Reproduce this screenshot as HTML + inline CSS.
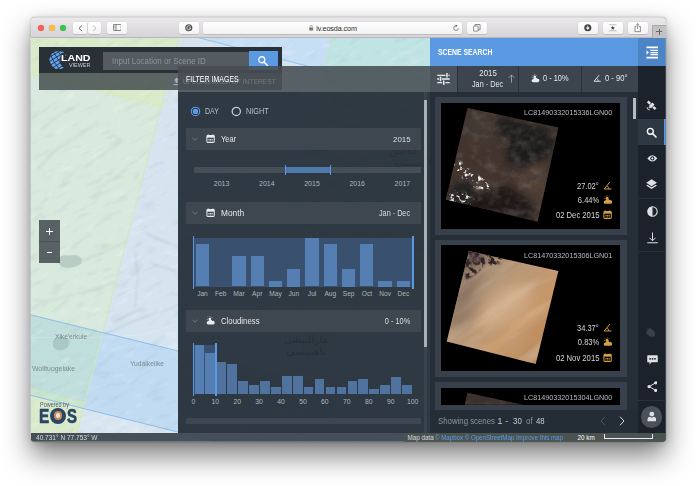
<!DOCTYPE html>
<html><head><meta charset="utf-8"><title>Land Viewer</title>
<style>
html,body{margin:0;padding:0;}
body{width:696px;height:486px;overflow:hidden;background:#fff;position:relative;font-family:"Liberation Sans",sans-serif;}
#shadow{position:absolute;left:30.7px;top:17.4px;width:635.1px;height:424.3px;border-radius:4px;box-shadow:0 14px 28px rgba(0,0,0,0.5),0 2px 8px rgba(0,0,0,0.15),0 0 1px rgba(0,0,0,0.5);background:#ccc;}
#win{position:absolute;left:0;top:0;width:696px;height:486px;clip-path:inset(17.4px 30.2px 44.3px 30.7px round 3.5px);}
#win div,#win span,#win svg{position:absolute;display:block;}
#win span{white-space:nowrap;}
#win span span{position:static;display:inline;}
</style></head><body>
<div id="shadow"></div>
<div id="win">
<svg style="left:0;top:0" width="696" height="486" viewBox="0 0 696 486">
<defs>
<filter id="hill" x="0" y="0" width="100%" height="100%"><feTurbulence type="fractalNoise" baseFrequency="0.05 0.16" numOctaves="4" seed="7"/><feColorMatrix type="matrix" values="0 0 0 0 0.36  0 0 0 0 0.42  0 0 0 0 0.44  2.6 0 0 0 -1.45"/></filter>
<filter id="hill2" x="0" y="0" width="100%" height="100%"><feTurbulence type="fractalNoise" baseFrequency="0.05 0.16" numOctaves="4" seed="23"/><feColorMatrix type="matrix" values="0 0 0 0 1  0 0 0 0 1  0 0 0 0 1  2.6 0 0 0 -1.5"/></filter>
<filter id="rb" x="-20%" y="-20%" width="140%" height="140%"><feGaussianBlur stdDeviation="0.9"/></filter>
<clipPath id="mapclip"><rect x="30" y="37" width="401" height="405"/></clipPath>
</defs>
<g clip-path="url(#mapclip)">
<rect x="30" y="37" width="401" height="405" fill="#d6e4f0"/>
<polygon points="30,37 178.8,37 102.8,332.5 30,314.7" fill="#d8e9dd"/>
<polygon points="30,37 178.8,37 160.9,106.5 30,73.5" fill="#daebcb"/>
<polygon points="196,37 333,37 326,72 330,72" fill="#c7dff5"/>
<polygon points="332,37 431,37 431,300 270,300" fill="#c0e3e3"/>
<polyline points="332,37 270,300" fill="none" stroke="#cfe6b0" stroke-width="0.8"/>
<polygon points="30,314.7 102.8,332.5 84.7,403.2 30,389.0" fill="#bfdedc"/>
<polygon points="30,389.0 84.7,403.2 83.3,408.4 30,395.2" fill="#c9e4d3"/>
<polygon points="102.8,332.5 431,413.1 431,495.0 83.3,408.4" fill="#c0dbf2"/>
<polygon points="30,395.2 83.3,408.4 74.7,442 30,442" fill="#d9ebcc"/>
<polygon points="83.3,408.4 431,495.0 431,442 74.7,442" fill="#d9e6f1"/>
<g transform="rotate(-28 200 240)"><rect x="-100" y="-100" width="700" height="700" filter="url(#hill)" opacity="0.24"/><rect x="-100" y="-100" width="700" height="700" filter="url(#hill2)" opacity="0.3"/></g>
<g fill="none" stroke="#aebbc8" stroke-width="1.5" opacity="0.42" filter="url(#rb)"><path d="M136 252 C134 262 140 272 137 284 C135 292 138 300 134 308"/><path d="M104 334 C118 330 128 322 142 318 C154 314 166 312 178 304"/><path d="M112 322 C124 318 132 312 146 309"/><path d="M150 262 C158 268 166 266 176 272"/><path d="M146 232 C154 240 166 240 178 248"/></g>
<g fill="none" stroke="#b4c4bb" stroke-width="1.4" opacity="0.4" filter="url(#rb)"><path d="M34 300 C50 304 64 296 84 292 C96 290 104 284 116 282"/><path d="M60 268 C76 264 90 258 104 252 C112 248 118 246 126 242"/><path d="M40 130 C52 122 60 112 74 108 M56 150 C70 140 84 134 98 122 M84 168 C98 158 110 150 122 140 M96 190 C108 182 118 176 128 168 M38 170 C46 160 52 152 62 146"/></g>
<path d="M40 219 C52 205 50 175 68 160 C85 146 105 152 118 132 C124 120 108 105 112 90" fill="none" stroke="#eef4ee" stroke-width="0.6" opacity="0.55"/>
<path d="M30 338 C60 336 100 339 140 335 C160 332 170 326 178 322" fill="none" stroke="#f2f6fa" stroke-width="0.6" opacity="0.45"/>
<line x1="178.8" y1="37" x2="74.7" y2="442" stroke="#d3e8b4" stroke-width="0.9"/>
<line x1="30" y1="314.7" x2="431" y2="413.1" stroke="#7db5ea" stroke-width="0.8"/>
<line x1="30" y1="395.2" x2="431" y2="495.0" stroke="#7db5ea" stroke-width="0.8"/>
<polyline points="30,73.5 160.9,106.5 165.5,107.7 183,39" fill="none" stroke="#d9ec9e" stroke-width="0.7" opacity="0.95"/>
<polyline points="30,389 84.7,403.2" fill="none" stroke="#d3e8a8" stroke-width="0.8"/>
<line x1="196" y1="37" x2="330" y2="72" stroke="#7db5ea" stroke-width="0.7"/>
<path d="M58 259 q3 -5 11 -3.5 q9 -2 12.5 3 q1.5 6 -6 8 q-11 3 -15.5 -1.5 q-3 -2 -2 -6z" fill="#b9cdc5"/>
<path d="M53 341 q3 -5 9 -4 q7 0 7.5 5 q0 6 -7 8 q-8 1 -9.5 -4z" fill="#a9c9c6"/>
</g>
</svg>
<span style="left:54.80px;top:333.00px;font-size:6.8px;line-height:7.00px;color:#7d8b8b;font-weight:400;transform:scaleX(0.9713);transform-origin:0 50%;">Xike'erkule</span>
<span style="left:129.60px;top:360.00px;font-size:6.8px;line-height:7.00px;color:#7d8b93;font-weight:400;transform:scaleX(0.9883);transform-origin:0 50%;">Yudaikelike</span>
<span style="left:31.50px;top:365.00px;font-size:6.8px;line-height:7.00px;color:#7d8b8b;font-weight:400;transform:scaleX(1.0096);transform-origin:0 50%;">Wolituogelake</span>
<div style="left:38.80px;top:219.50px;width:21.50px;height:21.20px;background:rgba(66,76,80,0.86);"></div>
<div style="left:38.80px;top:240.70px;width:21.50px;height:0.60px;background:rgba(110,120,122,0.86);"></div>
<div style="left:38.80px;top:241.30px;width:21.50px;height:21.30px;background:rgba(66,76,80,0.86);"></div>
<div style="left:46.30px;top:231.10px;width:6.40px;height:1.00px;background:#fff;"></div>
<div style="left:49.00px;top:228.40px;width:1.00px;height:6.40px;background:#fff;"></div>
<div style="left:46.70px;top:251.90px;width:5.60px;height:1.00px;background:#fff;"></div>
<span style="left:39.80px;top:401.00px;font-size:6.9px;line-height:7.00px;color:#4c5f6e;font-weight:400;transform:scaleX(0.7931);transform-origin:0 50%;">Powered by</span>
<span style="left:38.90px;top:405.00px;font-size:20.1px;line-height:22.00px;color:#2b4564;font-weight:700;transform:scaleX(0.7596);transform-origin:0 50%;-webkit-text-stroke:0.7px #2b4564;">E</span>
<span style="left:67.10px;top:405.00px;font-size:20.1px;line-height:22.00px;color:#2b4564;font-weight:700;transform:scaleX(0.7396);transform-origin:0 50%;-webkit-text-stroke:0.7px #2b4564;">S</span>
<div style="left:50.1px;top:407.9px;width:15.8px;height:15.8px;border-radius:50%;background:#2b4564;"></div>
<div style="left:53.7px;top:411.4px;width:8.6px;height:8.6px;border-radius:50%;background:#e4ead6;border:2px solid #cf8650;box-sizing:border-box;"></div>
<div style="left:38.90px;top:47.00px;width:243.30px;height:26.20px;background:rgba(34,41,48,0.96);"></div>
<div style="left:38.90px;top:73.20px;width:243.30px;height:16.40px;background:rgba(62,72,74,0.82);"></div>
<svg style="left:49px;top:49.6px" width="20" height="20" viewBox="0 0 40 40">
<defs><clipPath id="gl"><circle cx="19" cy="20" r="18.6"/></clipPath>
<mask id="glm"><rect width="40" height="40" fill="#fff"/><circle cx="44" cy="19" r="22" fill="#000"/></mask></defs>
<g clip-path="url(#gl)" mask="url(#glm)"><circle cx="19" cy="20" r="18.6" fill="#62a2ec"/>
<g stroke="#222a31" stroke-width="1.5" fill="none" transform="rotate(-32 19 20)">
<path d="M-5 6H45 M-5 13H45 M-5 20H45 M-5 27H45 M-5 34H45"/>
<path d="M19 0V40 M11 0 Q8 20 11 40 M27 0 Q30 20 27 40 M4 0 Q-2 20 4 40 M34 0 Q40 20 34 40"/>
</g></g>
<path d="M26 2.5 L30 4.5 L28 7z M33 8 l2.5 2.5 l-3 1z M25 35 l4 -1.5 l-1 3.5z" fill="#62a2ec"/>
</svg>
<span style="left:61.30px;top:53.00px;font-size:8.5px;line-height:10.00px;color:#ffffff;font-weight:700;transform:scaleX(1.2496);transform-origin:0 50%;">LAND</span>
<span style="left:68.70px;top:63.00px;font-size:4.6px;line-height:5.00px;color:#c9d0d6;font-weight:400;transform:scaleX(1.1738);transform-origin:0 50%;">VIEWER</span>
<div style="left:103.30px;top:51.50px;width:145.50px;height:18.20px;background:#545c61;"></div>
<span style="left:111.60px;top:56.00px;font-size:9.3px;line-height:10.00px;color:#8d9599;font-weight:400;transform:scaleX(0.8509);transform-origin:0 50%;">Input Location or Scene ID</span>
<div style="left:248.80px;top:51.20px;width:29.00px;height:18.50px;background:#5b9ae3;"></div>
<svg style="left:257px;top:54.5px" width="12" height="12" viewBox="0 0 24 24"><circle cx="9.5" cy="9.5" r="6" fill="none" stroke="#fff" stroke-width="2.6"/><path d="M14 14 L21 21" stroke="#fff" stroke-width="3" stroke-linecap="round"/></svg>
<svg style="left:172.6px;top:77.2px" width="7" height="8.6" viewBox="0 0 14 17"><path d="M7 1 L12.5 7 H9 V12 H5 V7 H1.5Z M1 14.5 H13 V16.5 H1Z" fill="#aab2b5"/></svg>
<span style="left:183.00px;top:77.00px;font-size:7.8px;line-height:9.00px;color:#8e979a;font-weight:400;transform:scaleX(0.8564);transform-origin:0 50%;">UPLOAD AREA OF INTEREST</span>
<div style="left:177.50px;top:65.80px;width:252.50px;height:26.00px;background:rgba(70,77,82,0.88);"></div>
<div style="left:177.50px;top:91.80px;width:252.50px;height:341.50px;background:rgba(36,46,55,0.94);"></div>
<span style="left:283px;top:333px;width:46px;text-align:center;font-size:10.5px;line-height:12.5px;color:#232a31;opacity:0.75;font-family:'DejaVu Sans',sans-serif;">مارالبېشى</span>
<span style="left:281px;top:345px;width:50px;text-align:center;font-size:10.5px;line-height:12.5px;color:#232a31;opacity:0.75;font-family:'DejaVu Sans',sans-serif;">ناھىيىسى</span>
<span style="left:389px;top:144px;font-size:10.5px;line-height:12.5px;color:#232a31;opacity:0.6;font-family:'DejaVu Sans',sans-serif;">كەلپىن</span>
<span style="left:395px;top:156px;font-size:10.5px;line-height:12.5px;color:#232a31;opacity:0.6;font-family:'DejaVu Sans',sans-serif;">ناھىيىسى</span>
<span style="left:183.00px;top:77.00px;font-size:7.8px;line-height:9.00px;color:#6f787c;font-weight:400;transform:scaleX(0.8564);transform-origin:0 50%;">UPLOAD AREA OF INTEREST</span>
<span style="left:185.80px;top:74.00px;font-size:8.7px;line-height:10.00px;color:#ffffff;font-weight:400;transform:scaleX(0.8051);transform-origin:0 50%;">FILTER IMAGES</span>
<svg style="left:186px;top:104px" width="60" height="15" viewBox="0 0 60 15"><circle cx="9.5" cy="7.4" r="4.2" fill="none" stroke="#5b9ae3" stroke-width="1.1"/><circle cx="9.5" cy="7.4" r="2.7" fill="#5b9ae3"/><circle cx="50.3" cy="7.4" r="4.1" fill="none" stroke="#c3c9ce" stroke-width="1.3"/></svg>
<span style="left:204.90px;top:107.00px;font-size:8.2px;line-height:9.00px;color:#b9c0c6;font-weight:400;transform:scaleX(0.8491);transform-origin:0 50%;">DAY</span>
<span style="left:246.10px;top:107.00px;font-size:8.2px;line-height:9.00px;color:#b9c0c6;font-weight:400;transform:scaleX(0.8860);transform-origin:0 50%;">NIGHT</span>
<div style="left:185.80px;top:128.00px;width:235.50px;height:21.70px;background:rgba(72,81,89,0.62);"></div>
<svg style="left:191.90px;top:136.80px" width="6" height="4" viewBox="0 0 12 8"><path d="M1 1.5 L6 6.5 L11 1.5" fill="none" stroke="#8b949b" stroke-width="1.3"/></svg>
<svg style="left:205.80px;top:134.00px" width="9.2" height="9.2" viewBox="0 0 20 20"><path d="M5 1 V4 M15 1 V4" stroke="#e8ecef" stroke-width="2.4"/><rect x="2" y="3.5" width="16" height="15" rx="2" fill="none" stroke="#e8ecef" stroke-width="2.2"/><rect x="2" y="3.5" width="16" height="4.5" fill="#e8ecef"/><path d="M5.5 11h2.2v2.2H5.5z M9 11h2.2v2.2H9z M12.5 11h2.2v2.2h-2.2z M5.5 14.3h2.2v2H5.5z M9 14.3h2.2v2H9z M12.5 14.3h2.2v2h-2.2z" fill="#e8ecef"/></svg>
<span style="left:220.50px;top:134.00px;font-size:8.6px;line-height:10.00px;color:#e4e8eb;font-weight:400;transform:scaleX(0.8689);transform-origin:0 50%;">Year</span>
<span style="left:392.72px;top:135.00px;font-size:7.9px;line-height:9.00px;color:#d9dee2;font-weight:400;transform:scaleX(0.9957);transform-origin:100% 50%;">2015</span>
<div style="left:193.90px;top:167.00px;width:227.60px;height:6.30px;background:#454e57;"></div>
<div style="left:285.00px;top:167.00px;width:45.40px;height:6.30px;background:#4f78ad;"></div>
<div style="left:284.50px;top:165.00px;width:1.10px;height:10.20px;background:#5b9ae3;"></div>
<div style="left:329.90px;top:165.00px;width:1.10px;height:10.20px;background:#5b9ae3;"></div>
<span style="left:213.81px;top:180.00px;font-size:7px;line-height:7.00px;color:#aeb5bb;font-weight:400;font-family:'Liberation Sans',sans-serif;">2013</span>
<span style="left:259.01px;top:180.00px;font-size:7px;line-height:7.00px;color:#aeb5bb;font-weight:400;font-family:'Liberation Sans',sans-serif;">2014</span>
<span style="left:304.21px;top:180.00px;font-size:7px;line-height:7.00px;color:#aeb5bb;font-weight:400;font-family:'Liberation Sans',sans-serif;">2015</span>
<span style="left:349.41px;top:180.00px;font-size:7px;line-height:7.00px;color:#aeb5bb;font-weight:400;font-family:'Liberation Sans',sans-serif;">2016</span>
<span style="left:394.61px;top:180.00px;font-size:7px;line-height:7.00px;color:#aeb5bb;font-weight:400;font-family:'Liberation Sans',sans-serif;">2017</span>
<div style="left:185.80px;top:202.10px;width:235.50px;height:21.70px;background:rgba(72,81,89,0.62);"></div>
<svg style="left:191.90px;top:211.00px" width="6" height="4" viewBox="0 0 12 8"><path d="M1 1.5 L6 6.5 L11 1.5" fill="none" stroke="#8b949b" stroke-width="1.3"/></svg>
<svg style="left:205.80px;top:208.20px" width="9.2" height="9.2" viewBox="0 0 20 20"><path d="M5 1 V4 M15 1 V4" stroke="#e8ecef" stroke-width="2.4"/><rect x="2" y="3.5" width="16" height="15" rx="2" fill="none" stroke="#e8ecef" stroke-width="2.2"/><rect x="2" y="3.5" width="16" height="4.5" fill="#e8ecef"/><path d="M5.5 11h2.2v2.2H5.5z M9 11h2.2v2.2H9z M12.5 11h2.2v2.2h-2.2z M5.5 14.3h2.2v2H5.5z M9 14.3h2.2v2H9z M12.5 14.3h2.2v2h-2.2z" fill="#e8ecef"/></svg>
<span style="left:220.90px;top:208.00px;font-size:8.6px;line-height:10.00px;color:#e4e8eb;font-weight:400;transform:scaleX(0.9706);transform-origin:0 50%;">Month</span>
<span style="left:375.11px;top:209.00px;font-size:8.2px;line-height:9.00px;color:#d9dee2;font-weight:400;transform:scaleX(0.8863);transform-origin:100% 50%;">Jan - Dec</span>
<div style="left:193.50px;top:238.00px;width:219.70px;height:48.50px;background:#39506f;"></div>
<div style="left:195.70px;top:243.70px;width:13.30px;height:42.80px;background:#557eb2;"></div>
<div style="left:232.24px;top:256.10px;width:13.30px;height:30.40px;background:#557eb2;"></div>
<div style="left:250.51px;top:256.10px;width:13.30px;height:30.40px;background:#557eb2;"></div>
<div style="left:268.78px;top:280.50px;width:13.30px;height:6.00px;background:#557eb2;"></div>
<div style="left:287.05px;top:268.50px;width:13.30px;height:18.00px;background:#557eb2;"></div>
<div style="left:305.32px;top:237.70px;width:13.30px;height:48.80px;background:#557eb2;"></div>
<div style="left:323.59px;top:243.70px;width:13.30px;height:42.80px;background:#557eb2;"></div>
<div style="left:341.86px;top:268.50px;width:13.30px;height:18.00px;background:#557eb2;"></div>
<div style="left:360.13px;top:243.70px;width:13.30px;height:42.80px;background:#557eb2;"></div>
<div style="left:378.40px;top:280.50px;width:13.30px;height:6.00px;background:#557eb2;"></div>
<div style="left:396.67px;top:280.50px;width:13.30px;height:6.00px;background:#557eb2;"></div>
<div style="left:192.80px;top:235.70px;width:1.70px;height:53.00px;background:#5b9ae3;"></div>
<div style="left:412.30px;top:235.70px;width:1.70px;height:53.00px;background:#5b9ae3;"></div>
<span style="left:197.13px;top:290.00px;font-size:6.6px;line-height:7.00px;color:#aeb5bb;font-weight:400;">Jan</span>
<span style="left:215.03px;top:290.00px;font-size:6.6px;line-height:7.00px;color:#aeb5bb;font-weight:400;">Feb</span>
<span style="left:233.31px;top:290.00px;font-size:6.6px;line-height:7.00px;color:#aeb5bb;font-weight:400;">Mar</span>
<span style="left:252.12px;top:290.00px;font-size:6.6px;line-height:7.00px;color:#aeb5bb;font-weight:400;">Apr</span>
<span style="left:269.30px;top:290.00px;font-size:6.6px;line-height:7.00px;color:#aeb5bb;font-weight:400;">May</span>
<span style="left:288.48px;top:290.00px;font-size:6.6px;line-height:7.00px;color:#aeb5bb;font-weight:400;">Jun</span>
<span style="left:307.85px;top:290.00px;font-size:6.6px;line-height:7.00px;color:#aeb5bb;font-weight:400;">Jul</span>
<span style="left:324.47px;top:290.00px;font-size:6.6px;line-height:7.00px;color:#aeb5bb;font-weight:400;">Aug</span>
<span style="left:342.74px;top:290.00px;font-size:6.6px;line-height:7.00px;color:#aeb5bb;font-weight:400;">Sep</span>
<span style="left:361.75px;top:290.00px;font-size:6.6px;line-height:7.00px;color:#aeb5bb;font-weight:400;">Oct</span>
<span style="left:379.28px;top:290.00px;font-size:6.6px;line-height:7.00px;color:#aeb5bb;font-weight:400;">Nov</span>
<span style="left:397.55px;top:290.00px;font-size:6.6px;line-height:7.00px;color:#aeb5bb;font-weight:400;">Dec</span>
<div style="left:185.80px;top:310.20px;width:235.50px;height:21.50px;background:rgba(72,81,89,0.62);"></div>
<svg style="left:191.90px;top:319.10px" width="6" height="4" viewBox="0 0 12 8"><path d="M1 1.5 L6 6.5 L11 1.5" fill="none" stroke="#8b949b" stroke-width="1.3"/></svg>
<svg style="left:205.65px;top:315.65px" width="9.5" height="9.5" viewBox="0 0 22 22"><circle cx="9" cy="7" r="3.2" fill="#e8ecef"/><path d="M9 0.5v2 M3.5 2.5l1.4 1.4 M14.5 2.5l-1.4 1.4 M2 8h2" stroke="#e8ecef" stroke-width="1.5"/><path d="M5 19.5 a3.6 3.6 0 0 1 0.3 -7.2 a5 5 0 0 1 9.4 -0.8 a4 4 0 0 1 2.3 8z" fill="#e8ecef"/></svg>
<span style="left:220.90px;top:316.00px;font-size:8.6px;line-height:10.00px;color:#e4e8eb;font-weight:400;transform:scaleX(0.9072);transform-origin:0 50%;">Cloudiness</span>
<span style="left:381.94px;top:317.00px;font-size:8.2px;line-height:9.00px;color:#d9dee2;font-weight:400;transform:scaleX(0.9023);transform-origin:100% 50%;">0 - 10%</span>
<div style="left:193.50px;top:344.90px;width:21.70px;height:49.20px;background:#39506f;"></div>
<div style="left:194.50px;top:344.70px;width:9.70px;height:49.40px;background:#557eb2;"></div>
<div style="left:205.43px;top:352.60px;width:9.70px;height:41.50px;background:#557eb2;"></div>
<div style="left:216.36px;top:362.00px;width:9.70px;height:32.10px;background:#4f729f;"></div>
<div style="left:227.29px;top:364.20px;width:9.70px;height:29.90px;background:#4f729f;"></div>
<div style="left:238.22px;top:381.10px;width:9.70px;height:13.00px;background:#4f729f;"></div>
<div style="left:249.15px;top:385.20px;width:9.70px;height:8.90px;background:#4f729f;"></div>
<div style="left:260.08px;top:381.10px;width:9.70px;height:13.00px;background:#4f729f;"></div>
<div style="left:271.01px;top:386.70px;width:9.70px;height:7.40px;background:#4f729f;"></div>
<div style="left:281.94px;top:375.50px;width:9.70px;height:18.60px;background:#4f729f;"></div>
<div style="left:292.87px;top:375.50px;width:9.70px;height:18.60px;background:#4f729f;"></div>
<div style="left:303.80px;top:386.70px;width:9.70px;height:7.40px;background:#4f729f;"></div>
<div style="left:314.73px;top:379.20px;width:9.70px;height:14.90px;background:#4f729f;"></div>
<div style="left:325.66px;top:386.70px;width:9.70px;height:7.40px;background:#4f729f;"></div>
<div style="left:336.59px;top:386.70px;width:9.70px;height:7.40px;background:#4f729f;"></div>
<div style="left:347.52px;top:381.10px;width:9.70px;height:13.00px;background:#4f729f;"></div>
<div style="left:358.45px;top:379.20px;width:9.70px;height:14.90px;background:#4f729f;"></div>
<div style="left:369.38px;top:388.60px;width:9.70px;height:5.50px;background:#4f729f;"></div>
<div style="left:380.31px;top:384.90px;width:9.70px;height:9.20px;background:#4f729f;"></div>
<div style="left:391.24px;top:377.40px;width:9.70px;height:16.70px;background:#4f729f;"></div>
<div style="left:402.17px;top:384.90px;width:9.70px;height:9.20px;background:#4f729f;"></div>
<div style="left:192.80px;top:343.10px;width:1.70px;height:52.60px;background:#5b9ae3;"></div>
<div style="left:214.80px;top:343.10px;width:1.80px;height:52.60px;background:#5b9ae3;"></div>
<span style="left:191.41px;top:398.00px;font-size:6.8px;line-height:7.00px;color:#aeb5bb;font-weight:400;">0</span>
<span style="left:211.45px;top:398.00px;font-size:6.8px;line-height:7.00px;color:#aeb5bb;font-weight:400;">10</span>
<span style="left:233.38px;top:398.00px;font-size:6.8px;line-height:7.00px;color:#aeb5bb;font-weight:400;">20</span>
<span style="left:255.31px;top:398.00px;font-size:6.8px;line-height:7.00px;color:#aeb5bb;font-weight:400;">30</span>
<span style="left:277.24px;top:398.00px;font-size:6.8px;line-height:7.00px;color:#aeb5bb;font-weight:400;">40</span>
<span style="left:299.17px;top:398.00px;font-size:6.8px;line-height:7.00px;color:#aeb5bb;font-weight:400;">50</span>
<span style="left:321.10px;top:398.00px;font-size:6.8px;line-height:7.00px;color:#aeb5bb;font-weight:400;">60</span>
<span style="left:343.03px;top:398.00px;font-size:6.8px;line-height:7.00px;color:#aeb5bb;font-weight:400;">70</span>
<span style="left:364.96px;top:398.00px;font-size:6.8px;line-height:7.00px;color:#aeb5bb;font-weight:400;">80</span>
<span style="left:386.89px;top:398.00px;font-size:6.8px;line-height:7.00px;color:#aeb5bb;font-weight:400;">90</span>
<span style="left:406.93px;top:398.00px;font-size:6.8px;line-height:7.00px;color:#aeb5bb;font-weight:400;">100</span>
<div style="left:185.80px;top:417.50px;width:235.50px;height:6.30px;background:rgba(72,81,89,0.62);"></div>
<div style="left:423.50px;top:91.80px;width:3.60px;height:341.50px;background:rgba(255,255,255,0.05);"></div>
<div style="left:423.50px;top:100.00px;width:3.60px;height:247.00px;background:#a9afb4;"></div>
<div style="left:430.00px;top:38.00px;width:208.20px;height:27.80px;background:#5b9ae3;"></div>
<div style="left:638.20px;top:38.00px;width:27.60px;height:27.80px;background:#4d84c6;"></div>
<span style="left:437.80px;top:47.00px;font-size:8.4px;line-height:10.00px;color:#ffffff;font-weight:700;transform:scaleX(0.8165);transform-origin:0 50%;">SCENE SEARCH</span>
<svg style="left:645.6px;top:46.0px" width="12.6" height="12.8" viewBox="0 0 26 26"><path d="M1 1H25V4.5H1z M9 7.5H25V10H9z M9 12H25V14.5H9z M9 16.5H25V19H9z M1 22H25V25.5H1z M1 8.5 L6 13.2 L1 18z" fill="#fff"/></svg>
<div style="left:430.00px;top:65.80px;width:208.20px;height:25.90px;background:#3c444e;"></div>
<div style="left:457.00px;top:65.80px;width:0.80px;height:25.90px;background:#2a3139;"></div>
<div style="left:518.00px;top:65.80px;width:0.80px;height:25.90px;background:#2a3139;"></div>
<div style="left:581.00px;top:65.80px;width:0.80px;height:25.90px;background:#2a3139;"></div>
<div style="left:430.00px;top:65.80px;width:27.00px;height:26.00px;background:#4a525c;"></div>
<svg style="left:437.2px;top:72.8px" width="12.9" height="12" viewBox="0 0 25 24"><g fill="#e8ecef"><path d="M0 3.3H16.5V5.9H0z M22.5 3.3H25V5.9H22.5z M18 0H21V9.2H18z M0 10.7H4V13.3H0z M9.5 10.7H25V13.3H9.5z M5.2 7.4H8.2V16.6H5.2z M0 18.1H10V20.7H0z M16.5 18.1H25V20.7H16.5z M11.6 14.8H14.6V24H11.6z"/></g></svg>
<span style="left:478.88px;top:69.00px;font-size:8.2px;line-height:9.00px;color:#e4e8eb;font-weight:400;transform:scaleX(0.9593);transform-origin:50% 50%;">2015</span>
<span style="left:470.15px;top:80.00px;font-size:8.2px;line-height:9.00px;color:#e4e8eb;font-weight:400;transform:scaleX(0.8863);transform-origin:50% 50%;">Jan - Dec</span>
<svg style="left:507.8px;top:73.6px" width="7" height="9" viewBox="0 0 14 18"><path d="M7 17 V2 M1.5 7.5 L7 2 L12.5 7.5" fill="none" stroke="#b4bbc1" stroke-width="1.5"/></svg>
<svg style="left:531.10px;top:73.70px" width="9.2" height="9.2" viewBox="0 0 22 22"><circle cx="9" cy="7" r="3.2" fill="#e8ecef"/><path d="M9 0.5v2 M3.5 2.5l1.4 1.4 M14.5 2.5l-1.4 1.4 M2 8h2" stroke="#e8ecef" stroke-width="1.5"/><path d="M5 19.5 a3.6 3.6 0 0 1 0.3 -7.2 a5 5 0 0 1 9.4 -0.8 a4 4 0 0 1 2.3 8z" fill="#e8ecef"/></svg>
<span style="left:543.20px;top:74.00px;font-size:8.2px;line-height:9.00px;color:#e4e8eb;font-weight:400;transform:scaleX(0.9023);transform-origin:0 50%;">0 - 10%</span>
<svg style="left:593.00px;top:74.20px" width="8.6" height="8.6" viewBox="0 0 20 20"><path d="M14.5 2.5 L2.5 17 H18" fill="none" stroke="#e8ecef" stroke-width="2.1" stroke-linejoin="miter"/><path d="M8.5 10.5 Q12.5 12.5 12.5 17" fill="none" stroke="#e8ecef" stroke-width="1.8"/></svg>
<span style="left:605.00px;top:74.00px;font-size:8.2px;line-height:9.00px;color:#e4e8eb;font-weight:400;transform:scaleX(0.9279);transform-origin:0 50%;">0 - 90°</span>
<div style="left:430.00px;top:91.70px;width:208.20px;height:318.30px;background:#262e37;"></div>
<div style="left:638.20px;top:65.80px;width:27.60px;height:367.50px;background:#1b222b;"></div>
<div style="left:430px;top:91.7px;width:208.2px;height:318.3px;overflow:hidden;background:none;">
<div style="left:5px;top:5.80px;width:192px;height:137.2px;background:#37404b;"></div>
<div style="left:10.7px;top:11.30px;width:179.5px;height:125.8px;background:#000;"></div>
<div style="left:5px;top:148.20px;width:192px;height:137.2px;background:#37404b;"></div>
<div style="left:10.7px;top:153.70px;width:179.5px;height:125.8px;background:#000;"></div>
<div style="left:5px;top:290.70px;width:192px;height:137.2px;background:#37404b;"></div>
<div style="left:10.7px;top:296.20px;width:179.5px;height:125.8px;background:#000;"></div>
</div>
<div style="left:435.00px;top:404.70px;width:192.00px;height:5.30px;background:#37404b;"></div>
<svg style="left:0;top:0" width="696" height="486" viewBox="0 0 696 486">
<defs>
<filter id="tex1" x="0" y="0" width="100%" height="100%"><feTurbulence type="fractalNoise" baseFrequency="0.09 0.12" numOctaves="4" seed="3"/><feColorMatrix type="matrix" values="0 0 0 0 0.05  0 0 0 0 0.04  0 0 0 0 0.04  2.2 0 0 0 -0.95"/></filter>
<filter id="tex1b" x="0" y="0" width="100%" height="100%"><feTurbulence type="fractalNoise" baseFrequency="0.07 0.1" numOctaves="4" seed="9"/><feColorMatrix type="matrix" values="0 0 0 0 0.45  0 0 0 0 0.36  0 0 0 0 0.3  2.2 0 0 0 -1.1"/></filter>
<filter id="tex2" x="0" y="0" width="100%" height="100%"><feTurbulence type="fractalNoise" baseFrequency="0.015 0.07" numOctaves="3" seed="11"/><feColorMatrix type="matrix" values="0 0 0 0 0.5  0 0 0 0 0.38  0 0 0 0 0.3  1.9 0 0 0 -0.8"/></filter>
<filter id="tex2b" x="0" y="0" width="100%" height="100%"><feTurbulence type="fractalNoise" baseFrequency="0.015 0.07" numOctaves="3" seed="31"/><feColorMatrix type="matrix" values="0 0 0 0 0.92  0 0 0 0 0.76  0 0 0 0 0.58  1.9 0 0 0 -0.85"/></filter>
<filter id="speck" x="-10%" y="-10%" width="120%" height="120%"><feTurbulence type="fractalNoise" baseFrequency="0.22 0.22" numOctaves="3" seed="5" result="n"/><feColorMatrix in="n" type="matrix" values="0 0 0 0 1  0 0 0 0 1  0 0 0 0 1  6 0 0 0 -3.3" result="m"/><feGaussianBlur in="SourceGraphic" stdDeviation="1.2" result="b"/><feComposite in="b" in2="m" operator="in"/></filter>
<filter id="speckd" x="-10%" y="-10%" width="120%" height="120%"><feTurbulence type="fractalNoise" baseFrequency="0.2 0.2" numOctaves="3" seed="15" result="n"/><feColorMatrix in="n" type="matrix" values="0 0 0 0 1  0 0 0 0 1  0 0 0 0 1  5 0 0 0 -2.1" result="m"/><feGaussianBlur in="SourceGraphic" stdDeviation="1" result="b"/><feComposite in="b" in2="m" operator="in"/></filter>
<filter id="bl3" x="-60%" y="-60%" width="220%" height="220%"><feGaussianBlur stdDeviation="3"/></filter>
<filter id="bl5" x="-60%" y="-60%" width="220%" height="220%"><feGaussianBlur stdDeviation="5"/></filter>
<filter id="bl8" x="-60%" y="-60%" width="220%" height="220%"><feGaussianBlur stdDeviation="8"/></filter>
<linearGradient id="g2" gradientUnits="userSpaceOnUse" x1="455" y1="265" x2="550" y2="350"><stop offset="0" stop-color="#8f7966"/><stop offset="0.4" stop-color="#b99877"/><stop offset="0.7" stop-color="#c69768"/><stop offset="1" stop-color="#b98556"/></linearGradient>
<clipPath id="c1"><polygon points="467.5,108 558.4,127.5 537.6,221.7 445.9,199.5"/></clipPath>
<clipPath id="c2"><polygon points="468.9,251 558.4,271 535.7,363.9 446.7,341.4"/></clipPath>
<clipPath id="c3"><polygon points="467.5,392.8 558.4,412.3 537.6,506 445.9,484"/></clipPath>
<clipPath id="c3b"><rect x="430" y="380" width="208" height="24.7"/></clipPath>
</defs>
<g clip-path="url(#c1)"><rect x="440" y="100" width="125" height="130" fill="#43352e"/>
<ellipse cx="535" cy="180" rx="16" ry="24" fill="#564539" filter="url(#bl5)" opacity="0.8"/>
<ellipse cx="480" cy="130" rx="14" ry="16" fill="#4a3d36" filter="url(#bl5)" opacity="0.8"/>
<path d="M498 116 L552 130 L556 150 L540 162 L520 168 L505 160 L510 140 L495 130z" fill="#1f1a1d" filter="url(#bl3)" opacity="1"/>
<path d="M470 200 L505 185 L530 200 L536 222 L460 210z" fill="#1c1818" filter="url(#bl3)" opacity="0.9"/>
<path d="M448 185 L470 180 L480 200 L450 202z" fill="#1f1b1b" filter="url(#bl3)" opacity="0.8"/>
<rect x="440" y="100" width="125" height="130" filter="url(#tex1)" opacity="0.9"/><rect x="440" y="100" width="125" height="130" filter="url(#tex1b)" opacity="0.28"/>
<path d="M454 160 L462 162 L476 174 L492 182 L494 190 L480 190 L466 182 L455 172z" fill="#f4f4f8" filter="url(#speck)"/>
<path d="M446 192 L462 190 L474 200 L468 206 L447 201z" fill="#e8e8ee" filter="url(#speck)"/>
</g>
<g clip-path="url(#c2)"><rect x="440" y="245" width="125" height="125" fill="url(#g2)"/>
<ellipse cx="508" cy="308" rx="30" ry="15" fill="#d8b088" filter="url(#bl8)" opacity="0.8" transform="rotate(-35 505 310)"/>
<ellipse cx="462" cy="295" rx="14" ry="36" fill="#85705f" filter="url(#bl8)" opacity="0.8" transform="rotate(12 462 295)"/>
<g transform="rotate(-35 500 310)"><rect x="360" y="180" width="280" height="280" filter="url(#tex2)" opacity="0.5"/><rect x="360" y="180" width="280" height="280" filter="url(#tex2b)" opacity="0.35"/></g>
<path d="M467 250 L503 258 L499 266 L486 264 L476 274 L466 280 L464 268z" fill="#2e2228" filter="url(#speckd)"/>
<path d="M468 251 L488 256 L476 263 L467 265z" fill="#3a2c30" filter="url(#bl3)" opacity="0.7"/>
</g>
<g clip-path="url(#c3b)"><g clip-path="url(#c3)"><rect x="440" y="388" width="125" height="20" fill="#3c302b"/><rect x="440" y="388" width="125" height="20" filter="url(#tex1)" opacity="0.8"/><rect x="440" y="388" width="125" height="20" filter="url(#tex1b)" opacity="0.2"/></g></g>
</svg>
<span style="left:523.90px;top:108.00px;font-size:7.3px;line-height:9.00px;color:#b6bcc2;font-weight:400;transform:scaleX(0.9899);transform-origin:0 50%;">LC81490332015336LGN00</span>
<span style="left:575.40px;top:182.00px;font-size:8.2px;line-height:9.00px;color:#d4d8dc;font-weight:400;transform:scaleX(0.9160);transform-origin:100% 50%;">27.02°</span>
<svg style="left:603.10px;top:180.70px" width="9.4" height="9.4" viewBox="0 0 20 20"><path d="M14.5 2.5 L2.5 17 H18" fill="none" stroke="#d3a042" stroke-width="2.1" stroke-linejoin="miter"/><path d="M8.5 10.5 Q12.5 12.5 12.5 17" fill="none" stroke="#d3a042" stroke-width="1.8"/></svg>
<span style="left:575.95px;top:196.00px;font-size:8.2px;line-height:9.00px;color:#d4d8dc;font-weight:400;transform:scaleX(0.9204);transform-origin:100% 50%;">6.44%</span>
<svg style="left:602.60px;top:194.60px" width="10" height="10" viewBox="0 0 22 22"><circle cx="9" cy="7" r="3.2" fill="#d3a042"/><path d="M9 0.5v2 M3.5 2.5l1.4 1.4 M14.5 2.5l-1.4 1.4 M2 8h2" stroke="#d3a042" stroke-width="1.5"/><path d="M5 19.5 a3.6 3.6 0 0 1 0.3 -7.2 a5 5 0 0 1 9.4 -0.8 a4 4 0 0 1 2.3 8z" fill="#d3a042"/></svg>
<span style="left:552.70px;top:211.00px;font-size:8.2px;line-height:9.00px;color:#d4d8dc;font-weight:400;transform:scaleX(0.9376);transform-origin:100% 50%;">02 Dec 2015</span>
<svg style="left:602.90px;top:210.40px" width="9.2" height="9.2" viewBox="0 0 20 20"><path d="M5 1 V4 M15 1 V4" stroke="#d3a042" stroke-width="2.4"/><rect x="2" y="3.5" width="16" height="15" rx="2" fill="none" stroke="#d3a042" stroke-width="2.2"/><rect x="2" y="3.5" width="16" height="4.5" fill="#d3a042"/><path d="M5.5 11h2.2v2.2H5.5z M9 11h2.2v2.2H9z M12.5 11h2.2v2.2h-2.2z M5.5 14.3h2.2v2H5.5z M9 14.3h2.2v2H9z M12.5 14.3h2.2v2h-2.2z" fill="#d3a042"/></svg>
<span style="left:523.90px;top:251.00px;font-size:7.3px;line-height:9.00px;color:#b6bcc2;font-weight:400;transform:scaleX(0.9899);transform-origin:0 50%;">LC81470332015306LGN01</span>
<span style="left:575.40px;top:324.00px;font-size:8.2px;line-height:9.00px;color:#d4d8dc;font-weight:400;transform:scaleX(0.9160);transform-origin:100% 50%;">34.37°</span>
<svg style="left:603.10px;top:323.10px" width="9.4" height="9.4" viewBox="0 0 20 20"><path d="M14.5 2.5 L2.5 17 H18" fill="none" stroke="#d3a042" stroke-width="2.1" stroke-linejoin="miter"/><path d="M8.5 10.5 Q12.5 12.5 12.5 17" fill="none" stroke="#d3a042" stroke-width="1.8"/></svg>
<span style="left:575.95px;top:338.00px;font-size:8.2px;line-height:9.00px;color:#d4d8dc;font-weight:400;transform:scaleX(0.9204);transform-origin:100% 50%;">0.83%</span>
<svg style="left:602.60px;top:337.00px" width="10" height="10" viewBox="0 0 22 22"><circle cx="9" cy="7" r="3.2" fill="#d3a042"/><path d="M9 0.5v2 M3.5 2.5l1.4 1.4 M14.5 2.5l-1.4 1.4 M2 8h2" stroke="#d3a042" stroke-width="1.5"/><path d="M5 19.5 a3.6 3.6 0 0 1 0.3 -7.2 a5 5 0 0 1 9.4 -0.8 a4 4 0 0 1 2.3 8z" fill="#d3a042"/></svg>
<span style="left:552.70px;top:354.00px;font-size:8.2px;line-height:9.00px;color:#d4d8dc;font-weight:400;transform:scaleX(0.9376);transform-origin:100% 50%;">02 Nov 2015</span>
<svg style="left:602.90px;top:352.80px" width="9.2" height="9.2" viewBox="0 0 20 20"><path d="M5 1 V4 M15 1 V4" stroke="#d3a042" stroke-width="2.4"/><rect x="2" y="3.5" width="16" height="15" rx="2" fill="none" stroke="#d3a042" stroke-width="2.2"/><rect x="2" y="3.5" width="16" height="4.5" fill="#d3a042"/><path d="M5.5 11h2.2v2.2H5.5z M9 11h2.2v2.2H9z M12.5 11h2.2v2.2h-2.2z M5.5 14.3h2.2v2H5.5z M9 14.3h2.2v2H9z M12.5 14.3h2.2v2h-2.2z" fill="#d3a042"/></svg>
<span style="left:523.90px;top:393.00px;font-size:7.3px;line-height:9.00px;color:#b6bcc2;font-weight:400;transform:scaleX(0.9899);transform-origin:0 50%;">LC81490332015304LGN00</span>
<div style="left:633.00px;top:97.80px;width:3.00px;height:21.20px;background:#b5bbc0;"></div>
<div style="left:430.00px;top:410.00px;width:208.20px;height:23.30px;background:#242c35;"></div>
<span style="left:438.00px;top:416.00px;font-size:8.6px;line-height:10.00px;color:#8d969e;font-weight:400;transform:scaleX(0.9101);transform-origin:0 50%;">Showing scenes</span>
<span style="left:497.60px;top:416.00px;font-size:8.6px;line-height:10.00px;color:#c5cbd0;font-weight:400;">1</span>
<span style="left:505.30px;top:416.00px;font-size:8.6px;line-height:10.00px;color:#c5cbd0;font-weight:400;">-</span>
<span style="left:512.70px;top:416.00px;font-size:8.6px;line-height:10.00px;color:#c5cbd0;font-weight:400;transform:scaleX(0.9199);transform-origin:0 50%;">30</span>
<span style="left:525.60px;top:416.00px;font-size:8.6px;line-height:10.00px;color:#8d969e;font-weight:400;transform:scaleX(0.9202);transform-origin:0 50%;">of</span>
<span style="left:535.60px;top:416.00px;font-size:8.6px;line-height:10.00px;color:#c5cbd0;font-weight:400;transform:scaleX(0.8990);transform-origin:0 50%;">48</span>
<svg style="left:600px;top:416.4px" width="6" height="10" viewBox="0 0 12 20"><path d="M10 1.5 L2 10 L10 18.5" fill="none" stroke="#5a636c" stroke-width="1.6"/></svg>
<svg style="left:618.5px;top:416.4px" width="6" height="10" viewBox="0 0 12 20"><path d="M2 1.5 L10 10 L2 18.5" fill="none" stroke="#e8ecef" stroke-width="1.8"/></svg>
<div style="left:638.20px;top:118.90px;width:25.70px;height:26.20px;background:#2e3843;"></div>
<div style="left:663.90px;top:118.90px;width:1.90px;height:26.20px;background:#5b9ae3;"></div>
<svg style="left:645.8px;top:99.7px" width="11" height="11" viewBox="0 0 24 24"><g fill="#dde1e5" transform="rotate(45 12 12)"><rect x="8.6" y="6" width="6.8" height="11" rx="1"/><rect x="0" y="8.6" width="7.4" height="5.6"/><rect x="16.6" y="8.6" width="7.4" height="5.6"/><rect x="10.8" y="17" width="2.4" height="3.4"/></g><path d="M2.2 15.5 a6.3 6.3 0 0 0 6.3 6.3" fill="none" stroke="#dde1e5" stroke-width="1.8"/></svg>
<svg style="left:646.4px;top:126.5px" width="11.2" height="11.2" viewBox="0 0 24 24"><circle cx="9.3" cy="9.3" r="6.3" fill="none" stroke="#fff" stroke-width="2.9"/><path d="M14.2 14.2 L21.5 21.5" stroke="#fff" stroke-width="3.2" stroke-linecap="round"/></svg>
<svg style="left:646.5px;top:155.1px" width="10.6" height="6.8" viewBox="0 0 26 17"><path d="M0.5 8.5 Q13 -7 25.5 8.5 Q13 24 0.5 8.5z" fill="#dde1e5"/><circle cx="13" cy="8.5" r="5.2" fill="#1b222b"/><circle cx="13" cy="8.5" r="2.7" fill="#dde1e5"/></svg>
<svg style="left:646.4px;top:179.3px" width="11.2" height="10.4" viewBox="0 0 24 22"><path d="M12 0.5 L23.5 8 L12 15.5 L0.5 8z" fill="#dde1e5"/><path d="M3 12 L12 17.8 L21 12 L23.5 13.6 L12 21.2 L0.5 13.6z" fill="#dde1e5"/></svg>
<div style="left:638.20px;top:197.80px;width:27.60px;height:0.60px;background:#262e37;"></div>
<svg style="left:646.5px;top:205.8px" width="11" height="11" viewBox="0 0 22 22"><circle cx="11" cy="11" r="9.4" fill="none" stroke="#dde1e5" stroke-width="2.2"/><path d="M11 1.4 A9.6 9.6 0 0 0 11 20.6z" fill="#dde1e5"/></svg>
<svg style="left:646.5px;top:231.8px" width="11" height="12" viewBox="0 0 22 24"><path d="M11 1 V17 M5 11.5 L11 17.5 L17 11.5" fill="none" stroke="#dde1e5" stroke-width="2"/><path d="M0.5 21.6 H21.5" stroke="#dde1e5" stroke-width="2.2"/></svg>
<div style="left:638.20px;top:251.30px;width:27.60px;height:0.60px;background:#262e37;"></div>
<svg style="left:646.2px;top:328.0px" width="11" height="11" viewBox="0 0 22 22"><g transform="rotate(38 11 11)" fill="#39424c"><path d="M1 5 H14 L20 11 L14 17 H1z"/></g><g transform="translate(-1.6 -1.8) rotate(38 11 11)"><path d="M1 5 H14 L20 11 L14 17 H1z" fill="none" stroke="#39424c" stroke-width="1.3"/></g></svg>
<svg style="left:646.5px;top:354.8px" width="11" height="10.4" viewBox="0 0 24 22.6"><path d="M2 0.5 H22 Q23.5 0.5 23.5 2 V14.5 Q23.5 16 22 16 H9.5 L5.5 21.5 V16 H2 Q0.5 16 0.5 14.5 V2 Q0.5 0.5 2 0.5z" fill="#dde1e5"/><rect x="5" y="6.6" width="3.4" height="3.4" fill="#1b222b"/><rect x="10.3" y="6.6" width="3.4" height="3.4" fill="#1b222b"/><rect x="15.6" y="6.6" width="3.4" height="3.4" fill="#1b222b"/></svg>
<svg style="left:646.6px;top:381.2px" width="10.8" height="11.2" viewBox="0 0 24 25"><path d="M19.5 4 L4.5 12.5 L19.5 21" fill="none" stroke="#dde1e5" stroke-width="2.2"/><circle cx="19.5" cy="4" r="3.6" fill="#dde1e5"/><circle cx="4.5" cy="12.5" r="3.6" fill="#dde1e5"/><circle cx="19.5" cy="21" r="3.6" fill="#dde1e5"/></svg>
<div style="left:638.20px;top:399.80px;width:27.60px;height:0.70px;background:#2a323b;"></div>
<div style="left:640.90px;top:406.20px;width:21.6px;height:21.6px;border-radius:50%;background:#4a515a;"></div>
<svg style="left:646.9000000000001px;top:411.4px" width="9.6" height="11" viewBox="0 0 20 22"><circle cx="10" cy="6" r="5" fill="#dde1e5"/><path d="M1 21 V17 Q1 12 6 11.5 L10 13.5 L14 11.5 Q19 12 19 17 V21z" fill="#dde1e5"/></svg>
<div style="left:30.70px;top:433.30px;width:635.10px;height:8.50px;background:rgba(58,68,76,0.93);"></div>
<div style="left:403.50px;top:433.30px;width:262.30px;height:8.50px;background:#4a534f;"></div>
<span style="left:35.90px;top:434.00px;font-size:6.6px;line-height:7.00px;color:#d5dade;font-weight:400;transform:scaleX(0.9912);transform-origin:0 50%;">40.731° N 77.753° W</span>
<span style="left:407.50px;top:434.00px;font-size:6.3px;line-height:7.00px;color:#d5dade;font-weight:400;">Map data</span>
<span style="left:434.60px;top:434.00px;font-size:6.3px;line-height:7.00px;color:#5c9de8;font-weight:400;transform:scaleX(0.9734);transform-origin:0 50%;">© Mapbox © OpenStreetMap Improve this map</span>
<span style="left:577.50px;top:434.00px;font-size:6.3px;line-height:7.00px;color:#ffffff;font-weight:400;">20 km</span>
<div style="left:603.5px;top:434.3px;width:49.5px;height:4.6px;border:0.8px solid #e8ecef;border-top:none;box-sizing:border-box;background:none;"></div>
<div style="left:30.7px;top:17.4px;width:635.1px;height:20.6px;background:linear-gradient(#ebe9eb,#d5d3d5);"></div>
<div style="left:30.7px;top:37px;width:635.1px;height:1px;background:#b9b7b9;"></div>
<div style="left:37.60px;top:24.70px;width:6.6px;height:6.6px;border-radius:50%;background:#fc5b57;box-shadow:0 0 0 0.3px rgba(0,0,0,0.2);"></div>
<div style="left:48.60px;top:24.70px;width:6.6px;height:6.6px;border-radius:50%;background:#fdbc40;box-shadow:0 0 0 0.3px rgba(0,0,0,0.2);"></div>
<div style="left:59.50px;top:24.70px;width:6.6px;height:6.6px;border-radius:50%;background:#34c84a;box-shadow:0 0 0 0.3px rgba(0,0,0,0.2);"></div>
<div style="left:73.10px;top:22.10px;width:13.80px;height:11.80px;border-radius:2px;background:linear-gradient(#ffffff,#f3f2f3);box-shadow:0 0.5px 0.6px rgba(0,0,0,0.2),0 0 0 0.4px rgba(0,0,0,0.06);"></div>
<div style="left:87.60px;top:22.10px;width:13.60px;height:11.80px;border-radius:2px;background:linear-gradient(#ffffff,#f3f2f3);box-shadow:0 0.5px 0.6px rgba(0,0,0,0.2),0 0 0 0.4px rgba(0,0,0,0.06);"></div>
<svg style="left:77.5px;top:24.8px" width="5" height="6.6" viewBox="0 0 10 13"><path d="M8 1 L2 6.5 L8 12" fill="none" stroke="#555" stroke-width="1.7"/></svg>
<svg style="left:92px;top:24.8px" width="5" height="6.6" viewBox="0 0 10 13"><path d="M2 1 L8 6.5 L2 12" fill="none" stroke="#b5b5b5" stroke-width="1.7"/></svg>
<div style="left:106.70px;top:22.10px;width:20.20px;height:11.80px;border-radius:2px;background:linear-gradient(#ffffff,#f3f2f3);box-shadow:0 0.5px 0.6px rgba(0,0,0,0.2),0 0 0 0.4px rgba(0,0,0,0.06);"></div>
<svg style="left:112.6px;top:24.2px" width="8.6" height="7.6" viewBox="0 0 17 15"><rect x="0.8" y="0.8" width="15.4" height="12" rx="1.2" fill="none" stroke="#555" stroke-width="1.4"/><path d="M6 1 V13" stroke="#555" stroke-width="1.3"/><path d="M2.3 3.5H4.5 M2.3 5.8H4.5 M2.3 8H4.5" stroke="#555" stroke-width="0.9"/></svg>
<div style="left:179.20px;top:22.10px;width:19.50px;height:11.80px;border-radius:2px;background:linear-gradient(#ffffff,#f3f2f3);box-shadow:0 0.5px 0.6px rgba(0,0,0,0.2),0 0 0 0.4px rgba(0,0,0,0.06);"></div>
<svg style="left:185px;top:24.2px" width="7.6" height="7.6" viewBox="0 0 16 16"><circle cx="8" cy="8" r="7.5" fill="#555"/><path d="M11.5 5.5 A4.2 4.2 0 1 0 12.2 8.5 H8.5" fill="none" stroke="#f4f4f4" stroke-width="1.7"/></svg>
<div style="left:203.20px;top:22.10px;width:259.30px;height:11.80px;border-radius:2px;background:linear-gradient(#ffffff,#f3f2f3);box-shadow:0 0.5px 0.6px rgba(0,0,0,0.2),0 0 0 0.4px rgba(0,0,0,0.06);"></div>
<svg style="left:309.3px;top:24.9px" width="4.4" height="5.8" viewBox="0 0 9 12"><rect x="0.5" y="5" width="8" height="6.5" rx="0.8" fill="#777"/><path d="M2.2 5 V3.3 a2.3 2.3 0 0 1 4.6 0 V5" fill="none" stroke="#777" stroke-width="1.2"/></svg>
<span style="left:316.2px;top:23.6px;font-size:7.2px;line-height:9px;color:#2b2b2b;letter-spacing:-0.099px;">lv.eosda.com</span>
<svg style="left:452.6px;top:24.3px" width="6.4" height="7.4" viewBox="0 0 13 15"><path d="M11 8.5 A4.8 4.8 0 1 1 6.5 3.6" fill="none" stroke="#555" stroke-width="1.3"/><path d="M5.5 0.8 L9 3.6 L5.5 6.4z" fill="#555"/></svg>
<div style="left:467.00px;top:22.10px;width:19.70px;height:11.80px;border-radius:2px;background:linear-gradient(#ffffff,#f3f2f3);box-shadow:0 0.5px 0.6px rgba(0,0,0,0.2),0 0 0 0.4px rgba(0,0,0,0.06);"></div>
<svg style="left:473px;top:24.3px" width="7.6" height="7.6" viewBox="0 0 15 15"><rect x="0.8" y="4" width="9.5" height="10" rx="1" fill="none" stroke="#555" stroke-width="1.3"/><path d="M4 3.8 V1 H14 V11.5 H10.6" fill="none" stroke="#555" stroke-width="1.3"/></svg>
<div style="left:578.20px;top:22.10px;width:20.00px;height:11.80px;border-radius:2px;background:linear-gradient(#ffffff,#f3f2f3);box-shadow:0 0.5px 0.6px rgba(0,0,0,0.2),0 0 0 0.4px rgba(0,0,0,0.06);"></div>
<svg style="left:584.4px;top:24.2px" width="7.6" height="7.6" viewBox="0 0 16 16"><circle cx="8" cy="8" r="7.5" fill="#444"/><path d="M8 3.5 V9 M5 8 L8 11.5 L11 8z" fill="#f4f4f4" stroke="#f4f4f4" stroke-width="1.8"/></svg>
<div style="left:603.20px;top:22.10px;width:19.60px;height:11.80px;border-radius:2px;background:linear-gradient(#ffffff,#f3f2f3);box-shadow:0 0.5px 0.6px rgba(0,0,0,0.2),0 0 0 0.4px rgba(0,0,0,0.06);"></div>
<svg style="left:608.2px;top:24.3px" width="9.6" height="7.6" viewBox="0 0 19 15"><path d="M2 1.5H17 M2 13.5H17" stroke="#999" stroke-width="1.2"/><path d="M9.5 3.2 L10.7 6.3 L14 6.4 L11.4 8.4 L12.3 11.6 L9.5 9.7 L6.7 11.6 L7.6 8.4 L5 6.4 L8.3 6.3z" fill="#444"/></svg>
<div style="left:627.70px;top:22.10px;width:20.00px;height:11.80px;border-radius:2px;background:linear-gradient(#ffffff,#f3f2f3);box-shadow:0 0.5px 0.6px rgba(0,0,0,0.2),0 0 0 0.4px rgba(0,0,0,0.06);"></div>
<svg style="left:634px;top:23.2px" width="7.4" height="9.4" viewBox="0 0 15 19"><path d="M5 7H2 V17.5 H13 V7 H10" fill="none" stroke="#555" stroke-width="1.3"/><path d="M7.5 12 V1.5 M4.6 4 L7.5 1.2 L10.4 4" fill="none" stroke="#555" stroke-width="1.3"/></svg>
<div style="left:652.3px;top:24.8px;width:13.5px;height:13.2px;background:#c3c1c3;border-left:0.5px solid #aaa;border-top:0.5px solid #aaa;box-sizing:border-box;"></div>
<div style="left:656.2px;top:31.2px;width:6px;height:0.8px;background:#666;"></div><div style="left:658.8px;top:28.6px;width:0.8px;height:6px;background:#666;"></div>
</div>
</body></html>
